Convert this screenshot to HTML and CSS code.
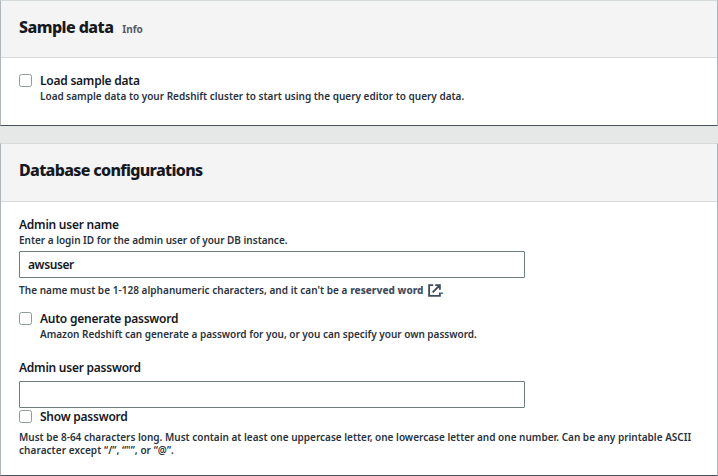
FILE: index.html
```html
<!DOCTYPE html>
<html lang="en">
<head>
<meta charset="utf-8">
<title>Create cluster</title>
<link rel="stylesheet" href="styles.css">
</head>
<body>
<main class="page">
  <section class="panel">
    <header class="panel-header">
      <h2 class="title title-sample">Sample data</h2>
      <a class="info">Info</a>
    </header>
    <div class="panel-body sample-body">
      <div class="check-row">
        <input type="checkbox" class="checkbox" id="load">
        <div class="check-text">
          <label class="label label-load" for="load">Load sample data</label>
          <p class="hint">Load sample data to your Redshift cluster to start using the query editor to query data.</p>
        </div>
      </div>
    </div>
  </section>

  <section class="panel">
    <header class="panel-header">
      <h2 class="title">Database configurations</h2>
    </header>
    <div class="panel-body database-body">
      <label class="label label-name" for="user">Admin user name</label>
      <p class="hint hint-login">Enter a login ID for the admin user of your DB instance.</p>
      <input class="text-input" id="user" type="text" value="awsuser">
      <p class="hint hint-name">The name must be 1-128 alphanumeric characters, and it can't be a <a class="link">reserved word<svg class="external" viewBox="0 0 14 14" aria-hidden="true"><path d="M5.6 1.2H1.2v11.6h11.6V9.2M7.8 1.2h5v5M12.4 1.6L5 9"/></svg></a>.</p>
      <div class="check-row auto-row">
        <input type="checkbox" class="checkbox" id="auto">
        <div class="check-text">
          <label class="label label-auto" for="auto">Auto generate password</label>
          <p class="hint hint-auto">Amazon Redshift can generate a password for you, or you can specify your own password.</p>
        </div>
      </div>
      <label class="label label-password" for="password">Admin user password</label>
      <input class="text-input password-input" id="password" type="password">
      <div class="check-row show-row">
        <input type="checkbox" class="checkbox" id="show">
        <label class="label label-show" for="show">Show password</label>
      </div>
      <p class="hint hint-rules">Must be 8-64 characters long. Must contain at least one uppercase letter, one lowercase letter and one number. Can be any printable ASCII <span class="rule-end">character except “/”, “"”, or “@”.</span></p>
    </div>
  </section>
</main>
</body>
</html>
```
FILE: styles.css
```css
* {
  box-sizing: border-box;
}

body {
  margin: 0;
  background: #e5e8e7;
  color: #16191f;
  font-family: "Noto Sans", "Open Sans", sans-serif;
  font-size: 12px;
  font-weight: 600;
}

h2,
p {
  margin: 0;
}

.page {
  display: flex;
  flex-direction: column;
  gap: 17px;
  height: 476px;
}

.panel {
  background: #fff;
  border: 1px solid #b0b5b9;
  border-top-color: #d5dbdb;
  border-bottom-color: #48525c;
}

.panel-header {
  display: flex;
  align-items: baseline;
  gap: 9px;
  height: 57px;
  padding: 14px 18px 0;
  background: #f4f4f4;
  border-bottom: 1px solid #d5d9d9;
}

.panel + .panel .panel-header {
  height: 58px;
}

.title {
  font-size: 16px;
  line-height: 24px;
  font-weight: 800;
  letter-spacing: -0.68px;
}

.title-sample {
  letter-spacing: -0.55px;
}

.info {
  color: #545b64;
  font-size: 10px;
  font-weight: 700;
}

.panel-body {
  padding: 0 18px;
}

.sample-body {
  height: 67px;
  padding-top: 14px;
}

.database-body {
  height: 273px;
  padding-top: 14px;
}

.check-row {
  display: flex;
  gap: 8px;
}

.checkbox {
  appearance: none;
  flex: none;
  width: 13px;
  height: 13px;
  margin: 2px 0 0;
  border: 1px solid #8f9a9c;
  border-radius: 2.5px;
  background: #fff;
}

.label {
  display: block;
  line-height: 17px;
  white-space: nowrap;
  letter-spacing: -0.24px;
}

.hint {
  color: #2a333c;
  font-size: 10px;
  line-height: 14px;
  white-space: nowrap;
}

.hint-login,
.hint-auto {
  letter-spacing: -0.015px;
}

.text-input {
  display: block;
  width: 506px;
  height: 27px;
  margin-top: 4px;
  padding: 0 8px;
  border: 1px solid #6f7c7e;
  border-radius: 1px;
  background: #fff;
  color: inherit;
  font: inherit;
  letter-spacing: -0.4px;
}

.hint-name {
  margin-top: 5px;
  letter-spacing: 0.035px;
}

.link {
  color: #414d5c;
  font-weight: 800;
}

.external {
  width: 13px;
  height: 13px;
  margin-left: 4px;
  vertical-align: -3px;
  fill: none;
  stroke: #414d5c;
  stroke-width: 2;
}

.auto-row {
  margin-top: 13px;
}

.label-password {
  margin-top: 18px;
}

.password-input {
  margin-top: 5px;
}

.hint-rules {
  margin-top: 6px;
  line-height: 13px;
}

.rule-end {
  display: block;
  letter-spacing: 0.06px;
}
```
